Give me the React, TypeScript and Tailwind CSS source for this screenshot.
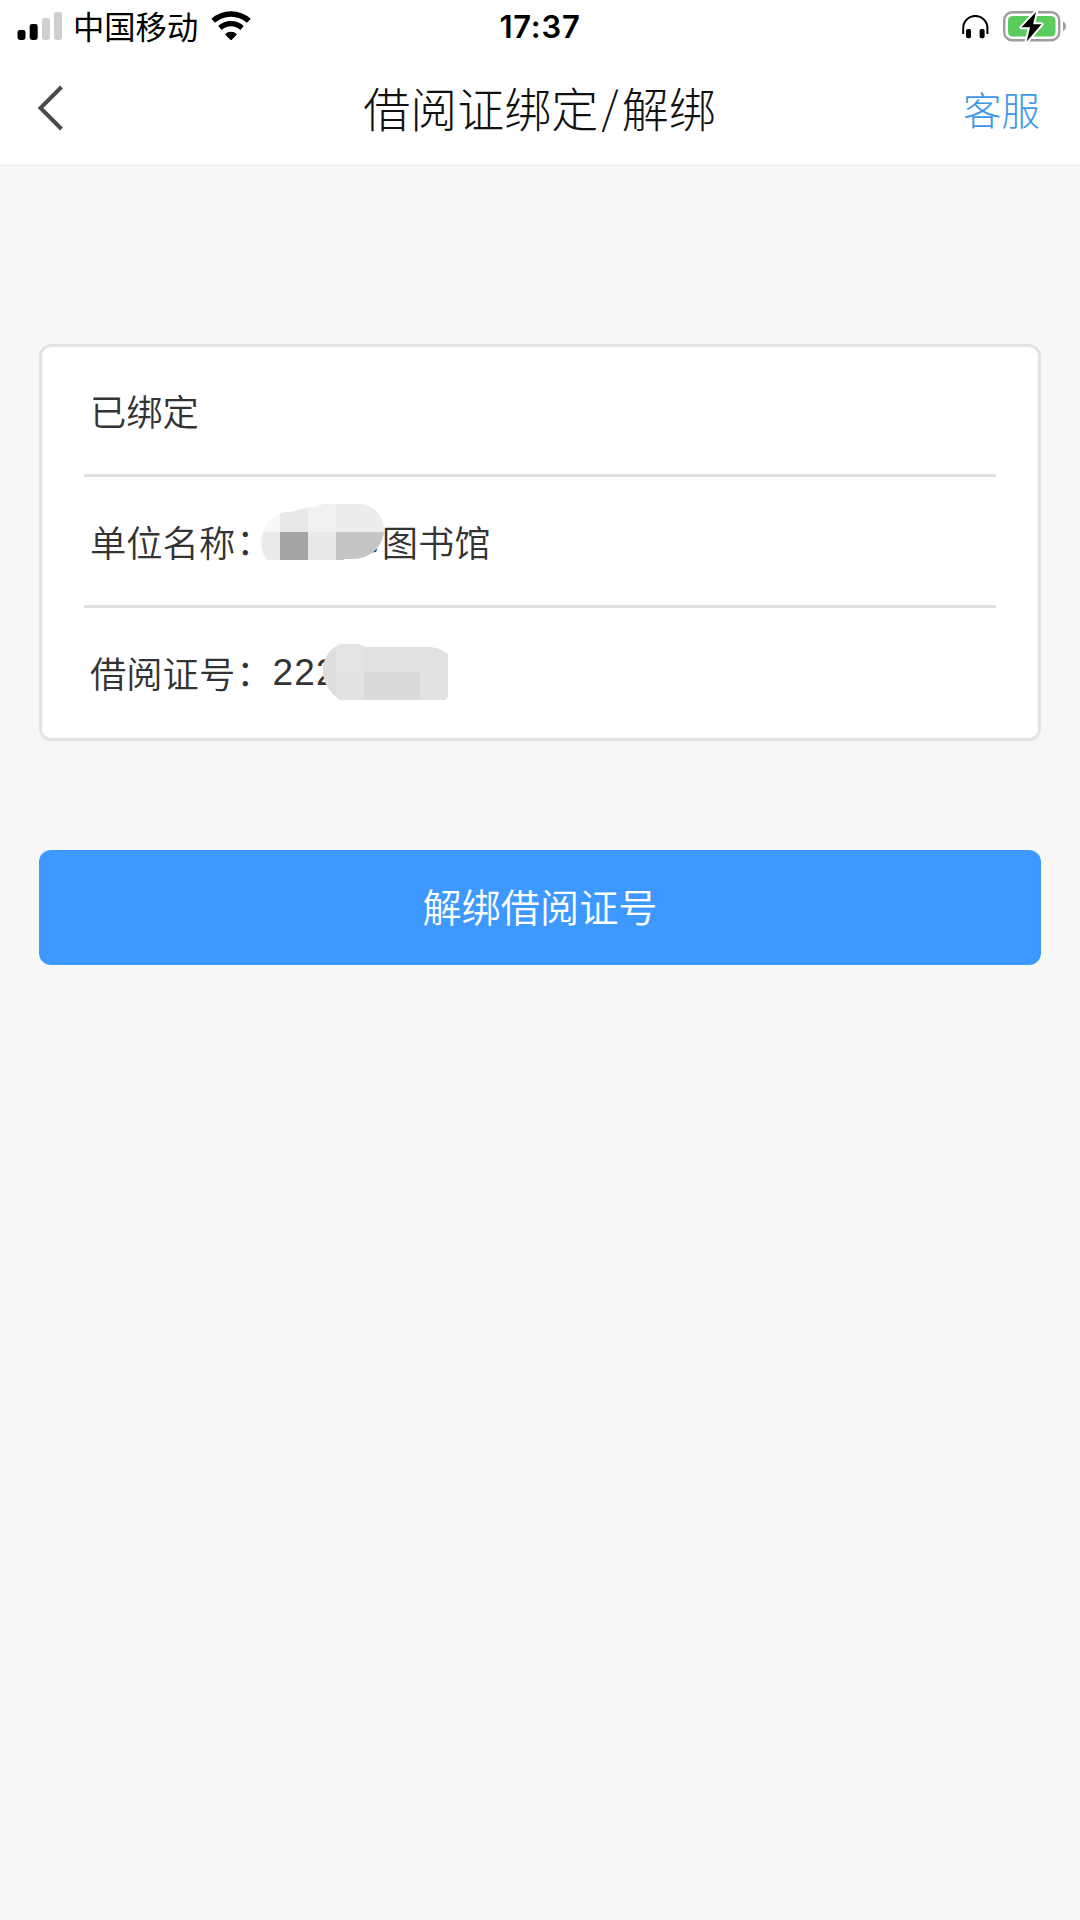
function SignalIcon() {
  return (
    <svg width="46" height="28" viewBox="0 0 46 28">
      <rect x="0.5" y="18" width="8" height="10" rx="2.4" fill="#000" />
      <rect x="12.7" y="12" width="8" height="16" rx="2.4" fill="#000" />
      <rect x="25" y="6" width="8" height="22" rx="2.4" fill="#cfcfcf" />
      <rect x="37" y="0" width="8" height="28" rx="2.4" fill="#cfcfcf" />
    </svg>
  );
}

function WifiIcon() {
  return (
    <svg width="40" height="30" viewBox="0 0 40 30" fill="none" stroke="#000">
      <path d="M2.2 9.8a26.5 26.5 0 0 1 35.6 0" strokeWidth="5.4" />
      <path d="M9 17a16 16 0 0 1 22 0" strokeWidth="5.2" />
      <path d="M14 23.2a8.6 8.6 0 0 1 12 0l-5.2 5.6a1.1 1.1 0 0 1-1.6 0z" fill="#000" stroke="none" />
    </svg>
  );
}

function HeadphonesIcon() {
  return (
    <svg width="27" height="24" viewBox="0 0 27 24">
      <path d="M1.2 19V13a12.1 12.1 0 0 1 24.2 0v6" fill="none" stroke="#000" strokeWidth="2" />
      <rect x="4" y="14" width="5" height="9.3" rx="1.8" fill="#000" />
      <rect x="17.6" y="14" width="5" height="9.3" rx="1.8" fill="#000" />
    </svg>
  );
}

function BatteryIcon() {
  return (
    <svg width="64" height="34" viewBox="0 0 64 34">
      <rect x="1.2" y="3.2" width="55" height="28" rx="8" fill="#fff" stroke="#9d9d9d" strokeWidth="2.4" />
      <rect x="5" y="7" width="47.5" height="20.5" rx="4.5" fill="#5bcb5e" />
      <path d="M60 12.5c4 1.5 4 8 0 9.5z" fill="#9d9d9d" />
      <path d="M33 3 18.5 18.3h8.6L23.7 32.5 38.5 15.3h-8.4z" fill="#000" stroke="#fff" strokeWidth="4" strokeLinejoin="round" paintOrder="stroke" />
    </svg>
  );
}

// Pixelated cover over the library's city name
function NameMask() {
  return (
    <svg width="124" height="57" viewBox="0 0 124 57">
      <clipPath id="name-mask">
        <path d="M6 56C-3 44-1 27 9 16 15 10 20 8 29 8 38 7 42 3 56 3 61 0 64 0 70 0H100C113 1 122 12 123 25 123 42 109 55 92 55H83V56z" />
      </clipPath>
      <g clipPath="url(#name-mask)" shapeRendering="crispEdges">
        <rect width="124" height="57" fill="#ebebeb" />
        <rect width="19" height="28" fill="#f8f8f8" />
        <rect x="19" width="28" height="28" fill="#e8e8e8" />
        <rect x="47" width="28" height="28" fill="#f1f1f1" />
        <rect x="75" width="49" height="28" fill="#ededed" />
        <rect x="19" y="28" width="28" height="29" fill="#a5a5a5" />
        <rect x="47" y="28" width="28" height="29" fill="#e9e9e9" />
        <rect x="75" y="28" width="49" height="29" fill="#c5c5c5" />
      </g>
    </svg>
  );
}

function NumberMask() {
  return (
    <svg width="126" height="56" viewBox="0 0 126 56">
      <clipPath id="number-mask">
        <path d="M17 56C8 50 0 39 0 27 0 12 9 3 18 0H34C38 0 40 3 44 3H106C114 3 121 7 125 10V53L122 56z" />
      </clipPath>
      <g clipPath="url(#number-mask)" shapeRendering="crispEdges">
        <rect width="126" height="56" fill="#e1e1e1" />
        <rect width="13" height="56" fill="#dedede" />
        <rect x="13" width="28" height="28" fill="#e4e4e4" />
        <rect x="41" y="28" width="56" height="28" fill="#d9d9d9" />
      </g>
    </svg>
  );
}

export default function App() {
  return (
    <div className="flex h-[1920px] w-[1080px] flex-col bg-[#f7f7f7] font-['Noto_Sans_CJK_SC',sans-serif]">
      <header className="h-[166px] border-b border-[#e9e9e9] bg-white">
        {/* Status bar */}
        <div className="grid h-[54px] grid-cols-[1fr_auto_1fr] items-center pr-[13px] pl-[17px]">
          <div className="flex items-center">
            <span className="flex pb-[2px]"><SignalIcon /></span>
            <span className="ml-[10px] pb-[2px] text-[31.3px] leading-[52px] text-black">中国移动</span>
            <span className="ml-[13px] flex pb-[2px]"><WifiIcon /></span>
          </div>
          <span className="mr-[4px] font-['Inter',sans-serif] text-[31px] leading-[52px] font-semibold tracking-[0.7px] text-black">17:37</span>
          <div className="flex items-center justify-end gap-[14px]">
            <HeadphonesIcon />
            <span className="flex pb-[2px]"><BatteryIcon /></span>
          </div>
        </div>

        {/* Navigation */}
        <div className="grid h-[108px] grid-cols-[1fr_auto_1fr] items-center pr-[40px] pl-[37px]">
          <svg width="27" height="46" viewBox="0 0 27 46" fill="none" stroke="#4a4a4a" strokeWidth="4">
            <path d="M24.5 2 3.5 23l21 21" />
          </svg>
          <h1 className="flex pb-[2px] pl-[2px] text-[47px] leading-[70px] font-light text-[#111]">
            <span>借阅证绑定</span>
            <span className="mr-[3px] ml-[3px] pb-[2px] text-[44px] leading-[66px]">/</span>
            <span>解绑</span>
          </h1>
          <button className="justify-self-end text-[38.5px] leading-[60px] font-light text-[#3d97ea]">客服</button>
        </div>
      </header>

      <main className="px-[39px] pt-[178px]">
        <section className="h-[397px] rounded-[12px] border-[3px] border-[#e3e3e3] bg-white px-[42px] text-[36.3px] leading-[54px] font-[350] text-[#333]">
          <div className="flex h-[130px] items-center border-b-[3px] border-[#e1e1e1] pb-[1px] pl-[6px]">已绑定</div>
          <div className="relative flex h-[131px] items-center border-b-[3px] border-[#e1e1e1] pl-[6px]">
            <span>单位名称</span>
            <span className="pb-[5px] pl-[1px]">：</span>
            <span className="ml-[73px] pb-[7px]">市</span>
            <span>图书馆</span>
            <span className="absolute top-[27px] left-[177px]"><NameMask /></span>
          </div>
          <div className="relative flex h-[130px] items-center pb-[2px] pl-[6px]">
            <span>借阅证号</span>
            <span className="pb-[5px] pl-[1px]">：</span>
            <span className="pt-[2px] font-['Liberation_Sans',sans-serif] text-[37px] font-normal tracking-[1.2px]">222</span>
            <span className="absolute top-[36px] left-[239px]"><NumberMask /></span>
          </div>
        </section>

        <button className="mt-[109px] h-[115px] w-full rounded-[12px] bg-[#3d98ff] pb-[4px] text-[39.2px] font-[350] text-white">
          解绑借阅证号
        </button>
      </main>
    </div>
  );
}
